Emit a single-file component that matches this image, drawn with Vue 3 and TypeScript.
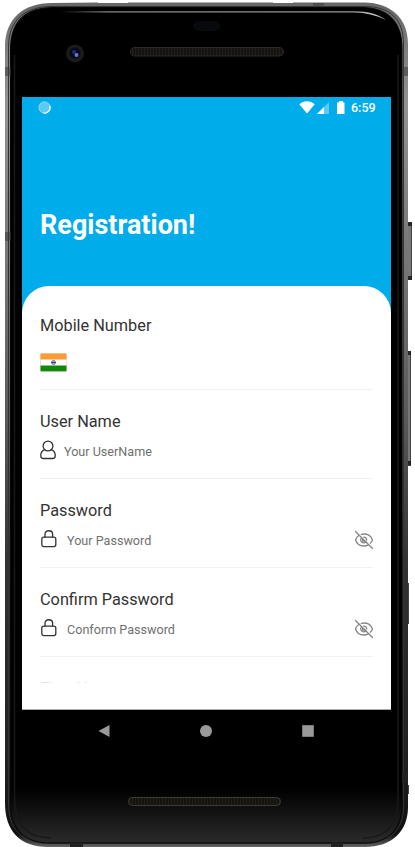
<script setup lang="ts">
interface Field {
  label: string
  placeholder: string
  icon: 'user' | 'lock'
  secret: boolean
}

const fields: Field[] = [
  { label: 'User Name', placeholder: 'Your UserName', icon: 'user', secret: false },
  { label: 'Password', placeholder: 'Your Password', icon: 'lock', secret: true },
  { label: 'Confirm Password', placeholder: 'Conform Password', icon: 'lock', secret: true },
]
</script>

<template>
  <main class="device">
    <svg class="shell" viewBox="0 0 415 847" aria-hidden="true">
      <defs>
        <linearGradient id="metal" x1="0" y1="0" x2="0" y2="1">
          <stop offset="0" stop-color="#666" />
          <stop offset=".06" stop-color="#808080" />
          <stop offset=".12" stop-color="#929292" />
          <stop offset=".3" stop-color="#777" />
          <stop offset=".48" stop-color="#5c5c5c" />
          <stop offset=".66" stop-color="#333" />
          <stop offset=".9" stop-color="#202020" />
          <stop offset=".985" stop-color="#101010" />
          <stop offset="1" stop-color="#666" />
        </linearGradient>
        <linearGradient id="glass" x1="0" y1="0" x2="0" y2="1">
          <stop offset="0" stop-color="#000" />
          <stop offset=".935" stop-color="#000" />
          <stop offset="1" stop-color="#2b2b2b" />
        </linearGradient>
        <linearGradient id="shine" x1="0" y1="0" x2="1" y2="0">
          <stop offset="0" stop-color="#000" />
          <stop offset=".15" stop-color="#888" />
          <stop offset=".9" stop-color="#999" />
          <stop offset="1" stop-color="#ddd" />
        </linearGradient>
        <pattern id="mesh" width="3" height="3" patternUnits="userSpaceOnUse">
          <rect width="3" height="3" fill="#141310" />
          <rect width="1" height="3" fill="#211f1a" />
        </pattern>
      </defs>
      <g fill="#777" stroke="#444" stroke-width="1">
        <rect x="407.500" y="222.500" width="4" height="57" />
        <rect x="407.500" y="351.500" width="3" height="114" />
      </g>
      <path d="M407 222h5v4h-5zM407 276h5v4h-5zM407 351h4v4h-4zM407 461h4v4h-4z" fill="#252525" />
      <path d="M407 583h2v41h-2zM408 785h1v9h-1z" fill="#444" />
      <path d="M5 47C5 19 23 3 52 3L98 2.500V3h30V2.500h145V3h20V2.500h71C391 3 408 18 408 44V807C408 831 392 847 365 847H48C20 847 5 831 5 803Z" fill="url(#metal)" />
      <path d="M8.500 47C8.500 21 24 6.500 52 6.500H364C390 6.500 403.500 19 403.500 44V807C403.500 829 390 843.500 365 843.500H48C22 843.500 8.500 829 8.500 803Z" fill="none" stroke="#333" stroke-width="1" />
      <path d="M10.500 50C10.500 21 25 7.500 54 7.500H362C388 7.500 402 22 402 48V804C402 829 389 843 364 843H50C24 843 10.500 829 10.500 803Z" fill="url(#glass)" stroke="#070707" />
      <path d="M14.500 55V797C14.500 824 27 838 51 838M398 55V799C398 825 386 838 363 838" fill="none" stroke="#191919" stroke-width="1.500" />
      <path d="M60 11.200H354C369 11.200 378 14 386 20Q371 12.500 354 12.500H60Z" fill="url(#shine)" />
      <path d="M5 67h6v9H5zM402 67h6v9h-6zM5 232h6v9H5zM313 3h11v4h-11z" fill="#3b3b3b" fill-opacity=".55" />
      <path d="M70 843h13v4H70zM331 843h12v4h-12zM402 773h6v10h-6z" fill="#222" />
      <rect x="193" y="21" width="27" height="10" rx="5" fill="#08090c" />
      <circle cx="75" cy="53.500" r="9" fill="#1b1b1b" />
      <circle cx="75" cy="53" r="5.500" fill="#080a18" />
      <circle cx="74" cy="52" r="2" fill="#202d76" />
      <circle cx="76.500" cy="55" r="2" fill="#6677d0" />
      <rect x="130.500" y="47.500" width="153" height="8.500" rx="4.200" fill="url(#mesh)" stroke="#2c2b27" />
      <rect x="128.500" y="797.500" width="152" height="8" rx="4" fill="url(#mesh)" stroke="#3b3b37" />
    </svg>

    <div class="screen">
      <header class="status">
        <svg class="sync" viewBox="0 0 14 14">
          <circle cx="7" cy="7" r="6" fill="#5bc9f1" stroke="#9bddf5" />
          <path d="M12.600 5A6 6 0 0 1 6 13" fill="none" stroke="#e6f8fe" stroke-width="1.500" />
        </svg>
        <svg class="signals" viewBox="0 0 48 15">
          <path d="M.300 4.200C4.500.300 11.500.300 15.700 4.200L8 13.600Z" fill="#fff" />
          <path d="M18 14 30 2V14Z" fill="#5dc9f1" />
          <path d="M18 14 25 7V14Z" fill="#fff" />
          <path d="M38 2.500h2V1h4v1.500h1.500V14H38Z" fill="#fff" />
        </svg>
        <span class="clock">6:59</span>
      </header>
      <h1>Registration!</h1>

      <section class="panel">
        <form class="scroll">
          <div class="field mobile">
            <label>Mobile Number</label>
            <svg class="flag" viewBox="0 0 27 19">
              <rect x=".500" y=".500" width="26" height="18" rx="1" fill="#fff" stroke="#e3e3e3" />
              <path d="M.500.500h26V6.500H.500Z" fill="#ff9933" />
              <path d="M.500 12.500h26V18.300H.500Z" fill="#138808" />
              <circle cx="13.500" cy="9.500" r="2" fill="#b6b6dc" stroke="#55559e" stroke-width=".8" />
              <path d="M11.500 9.500h4" stroke="#222278" stroke-width=".9" />
            </svg>
          </div>

          <div v-for="field in fields" :key="field.label" class="field">
            <label>{{ field.label }}</label>
            <div class="entry">
              <svg v-if="field.icon === 'user'" class="user" viewBox="0 0 16 20">
                <circle cx="8" cy="6" r="4.900" />
                <path d="M4.700 9.600C2 10.700.800 12.600.800 15.300V16C.800 17.600 1.800 18.500 3.400 18.500H12.600C14.200 18.500 15.200 17.600 15.200 16V15.300C15.200 12.600 14 10.700 11.300 9.600" />
              </svg>
              <svg v-else class="lock" viewBox="0 0 18 20">
                <rect x="1.800" y="8.200" width="14" height="9.400" rx="2" />
                <path d="M5 8V5.200C5 .6 12.600.6 12.600 5.200V8" />
              </svg>
              <span class="placeholder">{{ field.placeholder }}</span>
              <svg v-if="field.secret" class="eye" viewBox="0 0 20 20">
                <path d="M1.500 1.500 18.500 18.500" />
                <path d="M4.800 5.500C3 6.700 1.900 8.300 1.500 10C2.800 14 5.900 16 9.900 16C11.400 16 12.800 15.700 14 15.100M7.300 4.400C12.600 3 17.100 5.300 18.500 10C18.100 11.300 17.300 12.500 16.300 13.200" />
                <path d="M7.200 8.100C5.900 9.900 7.200 12.900 9.800 12.900C10.700 12.900 11.400 12.600 12 12M9.700 7.100C11.500 7.100 12.700 8.400 12.700 10" />
                <path d="M8.600 8.800V11H10.800" />
              </svg>
            </div>
          </div>

          <div class="field upcoming"><label>First Name</label></div>
        </form>
      </section>
    </div>

    <nav class="navigation">
      <svg viewBox="0 0 12 14"><path d="M.500 7 11.500 1V13Z" /></svg>
      <svg viewBox="0 0 12 14"><circle cx="6" cy="7" r="6" /></svg>
      <svg viewBox="0 0 12 14"><path d="M.200 1.200h11.600v11.600H.200Z" /></svg>
    </nav>
  </main>
</template>

<style>
body {
  margin: 0;
  background: #fff;
}
</style>

<style scoped>
.device {
  position: relative;
  box-sizing: border-box;
  width: 415px;
  height: 847px;
  padding: 97px 24px 0 22px;
  overflow: hidden;
  font-family: Roboto, sans-serif;
}

.shell {
  position: absolute;
  z-index: -1;
  inset: 0;
  width: 415px;
  height: 847px;
}

.screen {
  display: flex;
  flex-direction: column;
  box-sizing: border-box;
  width: 369px;
  height: 613px;
  background: #00adea;
}

.status {
  display: flex;
  align-items: center;
  box-sizing: border-box;
  height: 22px;
  padding: 0 15px 0 16px;
}

.sync {
  width: 13px;
  height: 13px;
  margin-top: -1px;
}

.signals {
  width: 48px;
  height: 15px;
  margin: -1px 0 0 auto;
}

.clock {
  width: 25px;
  margin-left: 4px;
  color: #fff;
  font-size: 12.5px;
  font-weight: 500;
  line-height: 22px;
}

h1 {
  height: 36px;
  margin: 88px 0 43px 18px;
  color: #fff;
  font-size: 27px;
  font-weight: 700;
  line-height: 36px;
}

.panel {
  box-sizing: border-box;
  height: 424px;
  padding: 0 18px;
  border-bottom: 1px solid #aaa;
  border-radius: 27px 27px 0 0;
  background: #fff;
}

.scroll {
  height: 397px;
  overflow: hidden;
}

.field {
  box-sizing: border-box;
  height: 89px;
  padding-top: 22px;
  border-bottom: 1px solid #f1f1f1;
}

label {
  display: block;
  color: #333;
  font-size: 16.3px;
  line-height: 20px;
}

.mobile {
  height: 104px;
  padding-top: 30px;
}

.flag {
  display: block;
  width: 27px;
  height: 19px;
  margin-top: 17px;
}

.entry {
  display: flex;
  align-items: center;
  height: 20px;
  margin-top: 10px;
}

.user,
.lock,
.eye {
  flex: none;
  height: 20px;
  fill: none;
  stroke: #333;
  stroke-width: 1.3;
  stroke-linecap: round;
  stroke-linejoin: round;
}

.user {
  width: 16px;
  margin: -4px 8px 0 0;
}

.lock {
  width: 18px;
  margin: -4px 9px 0 0;
}

.placeholder {
  color: #707070;
  font-size: 12.6px;
  line-height: 20px;
}

.eye {
  width: 20px;
  margin: -3px -1px 0 auto;
  stroke: #858585;
}

.upcoming {
  border: 0;
}

.upcoming label {
  color: #e4e4e4;
}

.navigation {
  display: flex;
  justify-content: space-between;
  padding: 14px 77px 0 76px;
}

.navigation svg {
  width: 12px;
  height: 14px;
  fill: #999;
}
</style>
